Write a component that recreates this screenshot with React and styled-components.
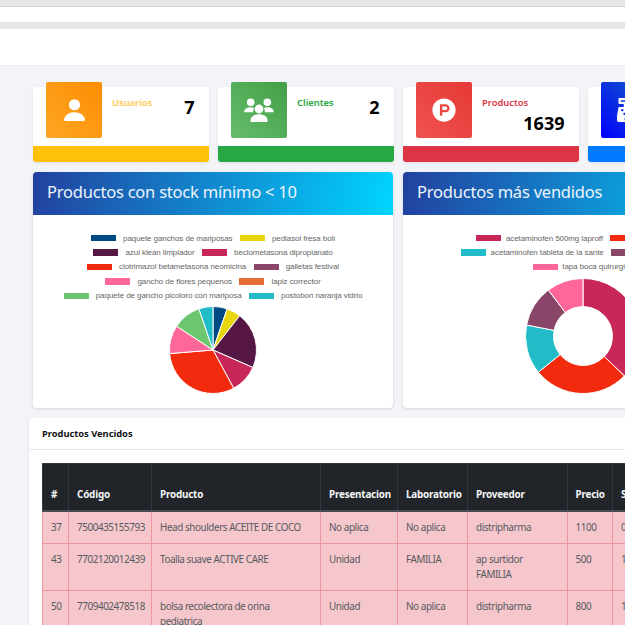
import React from "react"
import styled, { createGlobalStyle } from "styled-components"
import { FaProductHunt, FaCashRegister } from "react-icons/fa"

const GlobalStyle = createGlobalStyle`
  html, body {
    margin: 0;
    padding: 0;
    height: 625px;
    overflow: hidden;
    background: #f3f4f8;
    font-family: "Noto Sans", "Open Sans", sans-serif;
  }
`

const Page = styled.div`
  width: 625px;
  height: 625px;
  overflow: hidden;
`

const BrowserStrip = styled.div`
  height: 6px;
  background: #e6e6e6;
  border-bottom: 1px solid #d2d2d2;
`

const SearchBar = styled.div`
  height: 15px;
  background: #fff;
`

const Divider = styled.div`
  height: 7px;
  background: #e6e6e6;
`

const Navbar = styled.div`
  height: 36px;
  background: #fff;
  border-bottom: 1px solid #eceef2;
`

const Main = styled.main`
  width: 900px;
  padding: 21px 0 0 33px;
`

const StatRow = styled.div`
  display: flex;
  gap: 9.5px;
`

const StatCard = styled.div`
  width: 175.5px;
  height: 75px;
  flex: none;
  display: flex;
  flex-direction: column;
  background: #fff;
  border-radius: 3px;
  box-shadow: 0 1px 3px rgba(60, 70, 90, 0.12);
`

const StatBody = styled.div`
  flex: 1;
  display: flex;
  align-items: flex-start;
  padding: 0 14px 0 13px;
`

const IconBox = styled.div`
  width: 56px;
  height: 56px;
  flex: none;
  margin-top: -5px;
  display: flex;
  align-items: center;
  justify-content: center;
  color: #fff;
  border-radius: 2px;
  background: ${(p) => p.$bg};
  svg {
    display: block;
  }
`

const StatText = styled.div`
  flex: 1;
  display: flex;
  flex-wrap: wrap;
  align-items: flex-start;
  padding: 8px 0 0 10px;
`

const StatLabel = styled.span`
  font-size: 9.4px;
  line-height: 16px;
  font-weight: 600;
  color: ${(p) => p.$color};
`

const StatCount = styled.span`
  margin: 4px 0 0 auto;
  font-size: 18px;
  line-height: 16px;
  font-weight: 700;
  color: #000;
`

const StatBar = styled.div`
  height: 16px;
  border-radius: 0 0 3px 3px;
  background: ${(p) => p.$color};
`

const ChartRow = styled.div`
  display: flex;
  gap: 10px;
  margin-top: 10px;
`

const ChartCard = styled.section`
  width: 360px;
  height: 236px;
  flex: none;
  background: #fff;
  border-radius: 4px;
  box-shadow: 0 1px 3px rgba(60, 70, 90, 0.18);
`

const ChartHeader = styled.header`
  height: 43px;
  padding: 0 0 4px 14px;
  box-sizing: border-box;
  display: flex;
  align-items: center;
  border-radius: 4px 4px 0 0;
  font-size: 16.5px;
  letter-spacing: -0.22px;
  color: #eef4fb;
  background: linear-gradient(100deg, #22409f 0%, #00d4ff 100%);
`

const ChartBody = styled.div`
  padding-top: 16px;
`

const Legend = styled.div`
  display: flex;
  flex-direction: column;
  font-family: "Liberation Sans", Arial, sans-serif;
  font-size: 8px;
  letter-spacing: -0.08px;
  color: #666;
`

const LegendRow = styled.div`
  height: 14.4px;
  display: flex;
  align-items: center;
  justify-content: center;
  gap: 7.5px;
`

const LegendItem = styled.div`
  display: flex;
  align-items: center;
  gap: ${(p) => p.$gap}px;
  white-space: nowrap;
`

const Swatch = styled.i`
  width: 25px;
  height: 6.5px;
  background: ${(p) => p.$color};
`

const ChartSvg = styled.svg`
  display: block;
  margin: 0 auto;
`

const TableCard = styled.section`
  width: 800px;
  margin: 10px 0 0 -4px;
  background: #fff;
  border-radius: 4px 0 0 0;
  box-shadow: 0 1px 3px rgba(60, 70, 90, 0.12);
`

const TableHeader = styled.h6`
  height: 32px;
  box-sizing: border-box;
  margin: 0;
  padding: 0 13px;
  display: flex;
  align-items: center;
  font-size: 9.3px;
  font-weight: 700;
  color: #111;
  border-bottom: 1px solid #e3e6f0;
`

const TableBody = styled.div`
  padding: 13px;
`

const Table = styled.table`
  width: 630px;
  table-layout: fixed;
  border-collapse: collapse;
  font-size: 9.9px;
  line-height: 15px;
  letter-spacing: -0.42px;
`

const Th = styled.th`
  height: 47px;
  box-sizing: border-box;
  padding: 8px;
  text-align: left;
  vertical-align: bottom;
  font-weight: 700;
  letter-spacing: -0.2px;
  color: #f4f5f6;
  background: #212529;
  border: 1px solid #32383e;
  border-bottom: 2px solid #454d55;
`

const Td = styled.td`
  padding: 8px;
  vertical-align: top;
  color: #565a62;
  background: #f5c6cb;
  border: 1px solid #ed969e;
`

const usersLegend = [
  [["paquete ganchos de mariposas", "#004a84"], ["pediasol fresa boli", "#e8d70e"]],
  [["azul klean limpiador", "#561745"], ["beclometasona dipropianato", "#c72858"]],
  [["clotrimazol betametasona neomicina", "#f22a0e"], ["galletas festival", "#8a4668"]],
  [["gancho de flores pequenos", "#ff6699"], ["lapiz corrector", "#e56f33"]],
  [["paquete de gancho picoloro con mariposa", "#6cc56f"], ["postobon naranja vidrio", "#22bcc8"]],
]

const soldLegend = [
  [["acetaminofen 500mg laproff", "#c72858"], ["paracetamol 1", "#f22a0e"]],
  [["acetaminofen tableta de la sante", "#22bcc8"], ["galletas festival 10", "#8a4668"]],
  [["tapa boca quirurgico", "#ff6699"]],
]

// sweep of each slice in degrees, clockwise from 12 o'clock
const pieSlices = [
  [18.95, "#004a84"],
  [18.95, "#e8d70e"],
  [75.8, "#561745"],
  [37.9, "#c72858"],
  [113.7, "#f22a0e"],
  [37.9, "#ff6699"],
  [37.9, "#6cc56f"],
  [18.95, "#22bcc8"],
]

const doughnutSlices = [
  [134, "#c72858"],
  [97, "#f22a0e"],
  [50, "#22bcc8"],
  [42, "#8a4668"],
  [37, "#ff6699"],
]

const point = (c, r, deg) => {
  const a = ((deg - 90) * Math.PI) / 180
  return [c + r * Math.cos(a), c + r * Math.sin(a)]
}

const slicePath = (c, r, inner, start, end) => {
  const large = end - start > 180 ? 1 : 0
  const [x1, y1] = point(c, r, start)
  const [x2, y2] = point(c, r, end)
  if (!inner) return `M${c} ${c}L${x1} ${y1}A${r} ${r} 0 ${large} 1 ${x2} ${y2}Z`
  const [x3, y3] = point(c, inner, end)
  const [x4, y4] = point(c, inner, start)
  return `M${x1} ${y1}A${r} ${r} 0 ${large} 1 ${x2} ${y2}L${x3} ${y3}A${inner} ${inner} 0 ${large} 0 ${x4} ${y4}Z`
}

const PieChart = ({ slices, size, radius, inner }) => {
  let angle = 0
  return (
    <ChartSvg width={size} height={size} viewBox={`0 0 ${size} ${size}`}>
      {slices.map(([sweep, color]) => {
        const start = angle
        angle += sweep
        return (
          <path
            key={color}
            d={slicePath(size / 2, radius, inner, start, angle)}
            fill={color}
            stroke="#fff"
            strokeWidth="1"
          />
        )
      })}
    </ChartSvg>
  )
}

const ChartLegend = ({ rows, gap }) => (
  <Legend>
    {rows.map((row) => (
      <LegendRow key={row[0][0]}>
        {row.map(([label, color]) => (
          <LegendItem key={label} $gap={gap}>
            <Swatch $color={color} />
            {label}
          </LegendItem>
        ))}
      </LegendRow>
    ))}
  </Legend>
)

const PersonIcon = () => (
  <svg width="21" height="24" viewBox="0 0 24 26" fill="currentColor">
    <circle cx="12" cy="7" r="6.4" />
    <path d="M1.5 25.5c-1 0-1.5-.6-1.4-1.6C.7 19 5.5 15.5 12 15.5s11.3 3.5 11.9 8.4c.1 1-.4 1.6-1.4 1.6z" />
  </svg>
)

const GroupIcon = () => (
  <svg width="30" height="24" viewBox="0 0 30 24" fill="currentColor">
    <circle cx="6.7" cy="4.2" r="3.8" />
    <circle cx="23.3" cy="4.2" r="3.8" />
    <circle cx="15" cy="11" r="4.4" />
    <path d="M.2 14.2C.2 11 3 9.2 6.7 9.2c1.3 0 2.500.2 3.500.7-.7 1-1.100 2.200-1.100 3.500 0 .3 0 .6.100.8z" />
    <path d="M29.800 14.200c0-3.200-2.800-5-6.500-5-1.300 0-2.500.2-3.500.7.7 1 1.100 2.200 1.100 3.500 0 .3 0 .6-.1.800z" />
    <path d="M6.500 24v-1.800c0-3.700 3.800-5.900 8.500-5.900s8.500 2.200 8.500 5.900V24z" />
  </svg>
)

const stats = [
  { label: "Usuarios", count: "7", color: "#ffc94d", bar: "#ffc107", bg: "linear-gradient(45deg, #ffa726, #fb8c00)", icon: <PersonIcon /> },
  { label: "Clientes", count: "2", color: "#28a745", bar: "#28a745", bg: "linear-gradient(45deg, #66bb6a, #43a047)", icon: <GroupIcon /> },
  { label: "Productos", count: "1639", color: "#dc3545", bar: "#dc3545", bg: "linear-gradient(45deg, #ef5350, #e53935)", icon: <FaProductHunt size={24} /> },
  { label: "Ventas", count: "0", color: "#007bff", bar: "#007bff", bg: "linear-gradient(45deg, #0000ff, #1565c0)", icon: <FaCashRegister size={24} /> },
]

const columns = [
  ["#", 26],
  ["Código", 83],
  ["Producto", 169],
  ["Presentacion", 77],
  ["Laboratorio", 70],
  ["Proveedor", 99.5],
  ["Precio", 45.5],
  ["Stock", 60],
]

const rows = [
  ["37", "7500435155793", "Head shoulders ACEITE DE COCO", "No aplica", "No aplica", "distripharma", "1100", "0"],
  ["43", "7702120012439", "Toalla suave ACTIVE CARE", "Unidad", "FAMILIA", "ap surtidor FAMILIA", "500", "1"],
  ["50", "7709402478518", "bolsa recolectora de orina pediatrica", "Unidad", "No aplica", "distripharma", "800", "1"],
]

const App = () => (
  <Page>
    <GlobalStyle />
    <BrowserStrip />
    <SearchBar />
    <Divider />
    <Navbar />
    <Main>
      <StatRow>
        {stats.map((s) => (
          <StatCard key={s.label}>
            <StatBody>
              <IconBox $bg={s.bg}>{s.icon}</IconBox>
              <StatText>
                <StatLabel $color={s.color}>{s.label}</StatLabel>
                <StatCount>{s.count}</StatCount>
              </StatText>
            </StatBody>
            <StatBar $color={s.bar} />
          </StatCard>
        ))}
      </StatRow>

      <ChartRow>
        <ChartCard>
          <ChartHeader>Productos con stock mínimo &lt; 10</ChartHeader>
          <ChartBody>
            <ChartLegend rows={usersLegend} gap={7} />
            <PieChart slices={pieSlices} size={94} radius={43.5} />
          </ChartBody>
        </ChartCard>
        <ChartCard>
          <ChartHeader>Productos más vendidos</ChartHeader>
          <ChartBody>
            <ChartLegend rows={soldLegend} gap={4.5} />
            <PieChart slices={doughnutSlices} size={124} radius={57.5} inner={29.5} />
          </ChartBody>
        </ChartCard>
      </ChartRow>

      <TableCard>
        <TableHeader>Productos Vencidos</TableHeader>
        <TableBody>
          <Table>
            <colgroup>
              {columns.map(([name, width]) => (
                <col key={name} width={width} />
              ))}
            </colgroup>
            <thead>
              <tr>
                {columns.map(([name]) => (
                  <Th key={name}>{name}</Th>
                ))}
              </tr>
            </thead>
            <tbody>
              {rows.map((row) => (
                <tr key={row[0]}>
                  {row.map((cell, i) => (
                    <Td key={i}>{cell}</Td>
                  ))}
                </tr>
              ))}
            </tbody>
          </Table>
        </TableBody>
      </TableCard>
    </Main>
  </Page>
)

export default App
